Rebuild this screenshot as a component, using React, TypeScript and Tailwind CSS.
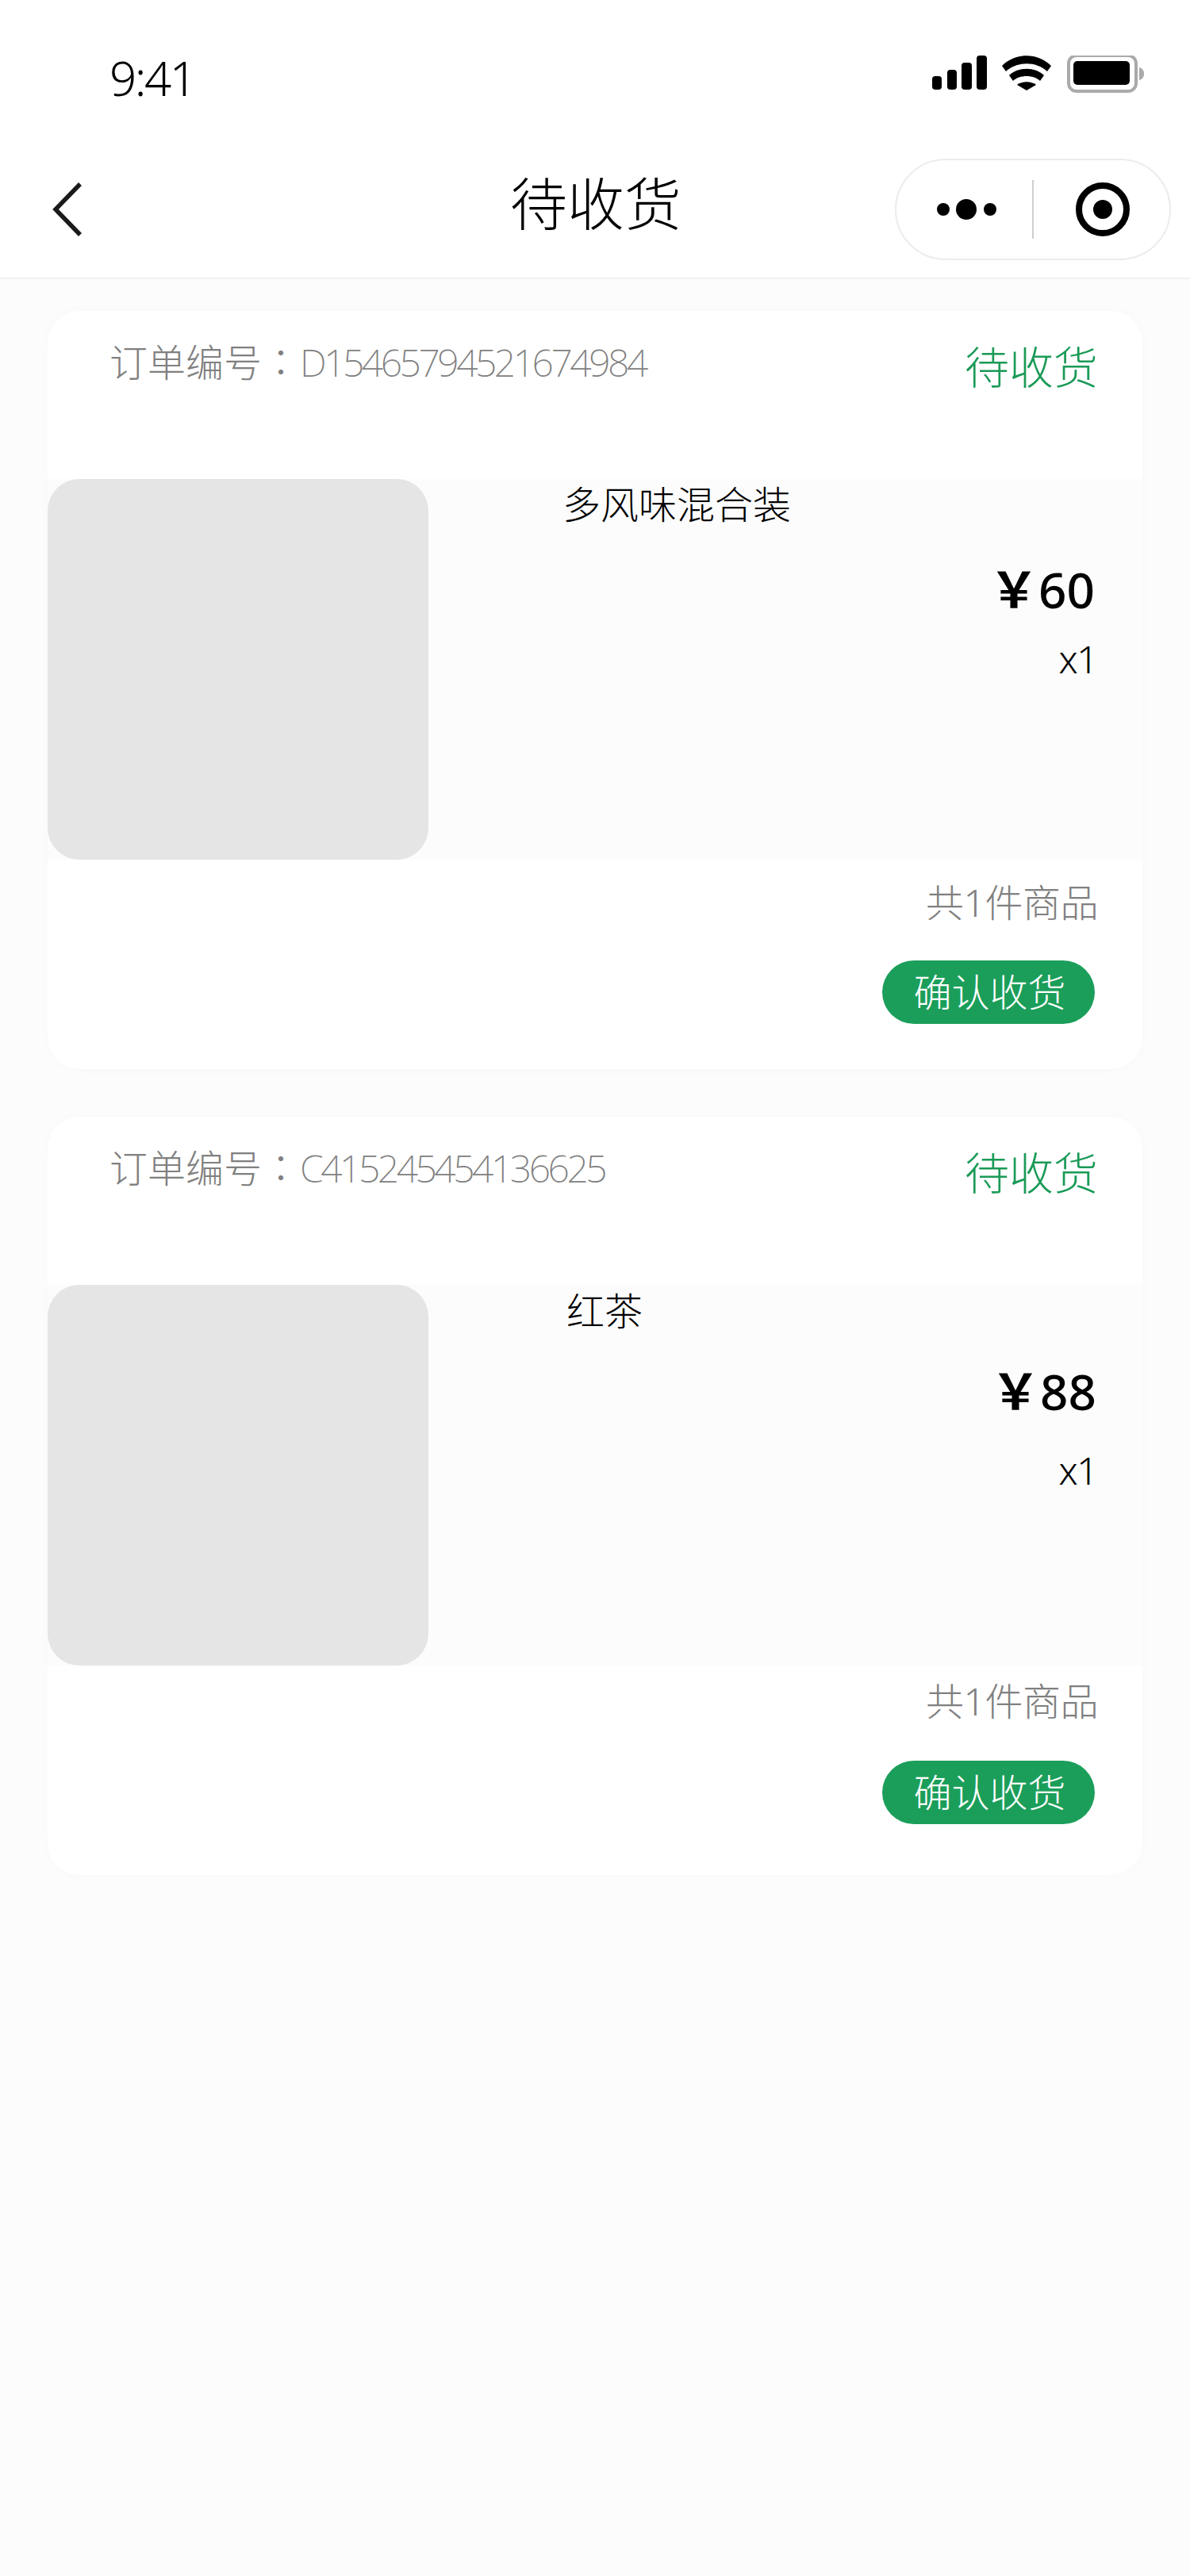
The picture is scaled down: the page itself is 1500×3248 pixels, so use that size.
import React from 'react';

interface Order {
  no: string;
  name: string;
  nameClass: string;
  price: string;
  priceClass: string;
  qtyClass: string;
  countClass: string;
  btnClass: string;
}

const orders: Order[] = [
  {
    no: 'D15465794521674984',
    name: '多风味混合装',
    nameClass: 'ml-[169px] mt-[2px]',
    price: '60',
    priceClass: 'mt-[99px]',
    qtyClass: 'mt-[18px] -mr-[2px]',
    countClass: 'pt-[24px]',
    btnClass: 'mt-[43px]',
  },
  {
    no: 'C415245454136625',
    name: '红茶',
    nameClass: 'ml-[174px] mt-[3px]',
    price: '88',
    priceClass: 'mt-[94px] -mr-[2px]',
    qtyClass: 'mt-[30px] -mr-[2px]',
    countClass: 'pt-[15px]',
    btnClass: 'mt-[45px]',
  },
];

const cjk = "font-['Noto_Sans','Noto_Sans_CJK_SC',sans-serif]";

function StatusIcons() {
  return (
    <svg width="268" height="48" viewBox="0 0 268 48" className="block">
      <rect x="0" y="26" width="12" height="17" rx="4" fill="#000" />
      <rect x="19" y="18" width="12" height="25" rx="4" fill="#000" />
      <rect x="37" y="9" width="13" height="34" rx="4" fill="#000" />
      <rect x="56" y="0" width="13" height="43" rx="4" fill="#000" />
      <path d="M88 13 C105 -4 133 -4 150 13 L145 20 C131 7 107 7 93 20 Z" fill="#000" />
      <path d="M97 25 C108 14 130 14 141 25 L136 32 C128 24 110 24 102 32 Z" fill="#000" />
      <path d="M107 37 C113 32 125 32 131 37 L119 44 Z" fill="#000" />
      <rect x="172" y="0" width="85" height="45" rx="10" fill="none" stroke="#aaa" strokeWidth="4" />
      <rect x="178" y="7" width="71" height="30" rx="5" fill="#000" />
      <path d="M261 15 C265 16 267 19 267 23 C267 27 265 30 261 31 Z" fill="#aaa" />
    </svg>
  );
}

function Capsule() {
  return (
    <div className="w-[348px] h-[128px] rounded-full border-2 border-[#ececec] bg-white flex items-center shrink-0">
      <div className="w-[171px] flex justify-center pl-[6px]">
        <svg width="76" height="36" viewBox="0 0 76 36">
          <circle cx="8" cy="18" r="8" fill="#000" />
          <ellipse cx="37" cy="18" rx="13" ry="13" fill="#000" />
          <circle cx="67" cy="18" r="8" fill="#000" />
        </svg>
      </div>
      <div className="w-[2px] h-[74px] bg-[#cfcfcf]" />
      <div className="flex-1 flex justify-center pl-[2px]">
        <svg width="68" height="68" viewBox="0 0 68 68">
          <circle cx="34" cy="34" r="30" fill="none" stroke="#000" strokeWidth="8" />
          <circle cx="34" cy="34" r="12" fill="#000" />
        </svg>
      </div>
    </div>
  );
}

function OrderCard({ order }: { order: Order }) {
  return (
    <div className="w-[1380px] h-[956px] bg-white rounded-[40px] shadow-[0_0_16px_rgba(0,0,0,0.02)] overflow-hidden flex flex-col">
      <div className="h-[212px] pl-[78px] pr-[56px] flex justify-between items-start pt-[26px] shrink-0">
        <span className="text-[48px] leading-[72px] font-extralight text-[#808080] whitespace-nowrap">
          订单编号<span className="font-['Noto_Sans_CJK_TC',sans-serif]">：</span>
          <span className="tracking-[-3.5px]">{order.no}</span>
        </span>
        <span className="text-[56px] leading-[84px] font-light text-[#1a9a57] mt-[2px]">待收货</span>
      </div>
      <div className="h-[480px] bg-[#fcfcfc] flex shrink-0">
        <div className="w-[480px] h-[480px] rounded-[40px] bg-[#e5e5e5] shrink-0" />
        <div className={`${order.nameClass} text-[48px] leading-[60px] font-light text-black`}>
          {order.name}
        </div>
        <div className="ml-auto pr-[60px] flex flex-col items-end">
          <div className={`${order.priceClass} text-[62px] leading-[80px] font-medium text-black`}>
            <span className="font-bold">￥</span>
            {order.price}
          </div>
          <div className={`${order.qtyClass} -mr-[3px] text-[48px] leading-[60px] font-light text-black tracking-[-1.5px]`}>
            x1
          </div>
        </div>
      </div>
      <div className={`${order.countClass} pr-[56px] flex flex-col items-end`}>
        <div className="text-[48px] leading-[60px] font-light text-[#808080] tracking-[-0.5px]">共1件商品</div>
        <div
          className={`${order.btnClass} mr-[4px] w-[268px] h-[80px] rounded-full bg-[#1b9e5a] text-white text-[48px] leading-[80px] font-light text-center pl-[3px]`}
        >
          确认收货
        </div>
      </div>
    </div>
  );
}

export default function App() {
  return (
    <div className={`${cjk} w-[1500px] min-h-[3248px] bg-[#fcfcfc]`}>
      <header className="h-[352px] bg-white border-b-2 border-[#f1f1f1]">
        <div className="h-[190px] pl-[138px] pr-[57px] flex justify-between items-start pt-[58px]">
          <span className="text-[60px] leading-[80px] font-light text-black tracking-[-2.5px]">9:41</span>
          <div className="pt-[12px]">
            <StatusIcons />
          </div>
        </div>
        <div className="h-[140px] px-[24px] grid grid-cols-[1fr_auto_1fr] items-center">
          <svg width="38" height="68" viewBox="0 0 38 68" className="ml-[42px] mt-[8px]">
            <path d="M35 2 L4 34 L35 66" fill="none" stroke="#1a1a1a" strokeWidth="5.5" />
          </svg>
          <span className="text-[72px] leading-[90px] font-light text-black -mt-[8px] ml-[2px]">待收货</span>
          <div className="justify-self-end mt-[8px]">
            <Capsule />
          </div>
        </div>
      </header>
      <main className="pt-[40px] px-[60px] flex flex-col gap-[60px]">
        {orders.map((order) => (
          <OrderCard key={order.no} order={order} />
        ))}
      </main>
    </div>
  );
}
